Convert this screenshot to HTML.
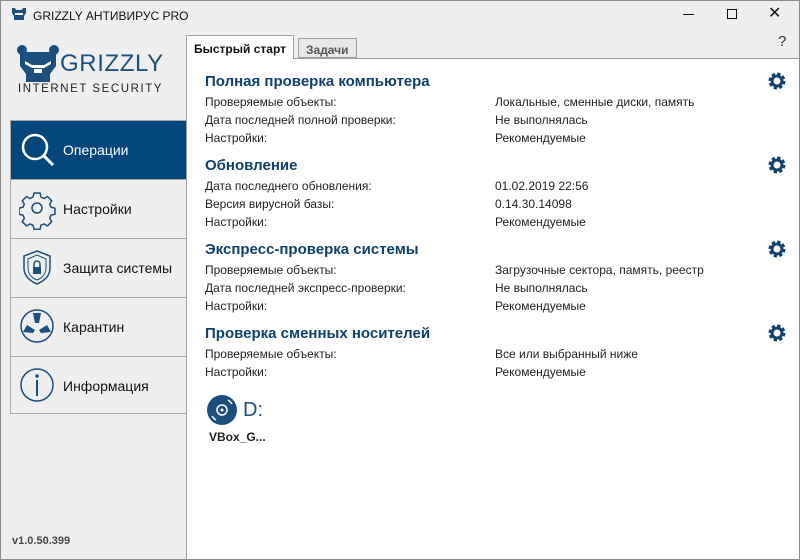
<!DOCTYPE html>
<html><head><meta charset="utf-8"><style>
*{margin:0;padding:0;box-sizing:border-box}
body{width:800px;height:560px;overflow:hidden;background:#efefef;font-family:"Liberation Sans",sans-serif;position:relative}
.frame{position:absolute;left:0;top:0;width:800px;height:560px;border:1px solid #8a8a8a;pointer-events:none}
.a{position:absolute}
.title{left:33px;top:9px;font-size:12px;color:#111}
.nav{left:10px;top:120px;width:177px;height:294px;border:1px solid #a8a8a8;border-right:none}
.it{height:59px;border-bottom:1px solid #a8a8a8;position:relative;font-size:14px;color:#111}
.it span{position:absolute;left:52px;top:21px}
.it svg{position:absolute;left:8px;top:10px}
.act{background:#02477c;color:#fff;height:59px}
.panel{left:186px;top:58px;width:614px;height:502px;background:#fff;border-top:1px solid #a0a0a0;border-left:1px solid #a0a0a0}
.tab{top:37px;height:22px;font-size:12px;font-weight:bold;padding:5px 7px 0}
h3{position:absolute;left:205px;font-size:15px;color:#10406f;font-weight:bold}
.r{position:absolute;font-size:12px;color:#222}
.gear{position:absolute;left:768px}
</style></head><body>
<svg class="a" style="left:11px;top:7px" width="16" height="14" viewBox="0 0 16 14"><path d="M1 1h3l1 2h6l1-2h3v5l-2 3v4H3V9L1 6z" fill="#1c4e7e"/><rect x="4" y="6" width="8" height="2" fill="#fff"/></svg>
<div class="a title">GRIZZLY АНТИВИРУС PRO</div>
<div class="a" style="left:683px;top:14px;width:11px;border-top:1px solid #111"></div>
<div class="a" style="left:727px;top:9px;width:10px;height:10px;border:1px solid #111"></div>
<div class="a" style="left:768px;top:3px;font-size:16px;color:#111">✕</div>
<div class="a" style="left:778px;top:33px;font-size:15px;color:#333">?</div>
<svg class="a" style="left:17px;top:44px" width="42" height="40" viewBox="0 0 42 40"><circle cx="5" cy="6" r="5" fill="#1c4e7e"/><circle cx="37" cy="6" r="5" fill="#1c4e7e"/><path d="M3 8h36v14l-6 8v8H9v-8L3 22z" fill="#1c4e7e"/><path d="M8 17l7 4h12l7-4v3l-7 4H15l-7-4z" fill="#fff"/><rect x="17" y="25" width="8" height="4" fill="#fff"/></svg>
<div class="a" style="left:60px;top:50px;font-size:24px;color:#1c4e7e;letter-spacing:0.6px">GRIZZLY</div>
<div class="a" style="left:18px;top:83px;font-size:11.5px;color:#222;letter-spacing:1.55px">INTERNET SECURITY</div>
<div class="a nav">
<div class="it act"><svg width="40" height="40" viewBox="0 0 40 40"><circle cx="16" cy="16" r="12" fill="none" stroke="#fff" stroke-width="2.5"/><path d="M25 25l9 9" stroke="#fff" stroke-width="3"/></svg><span>Операции</span></div>
<div class="it"><svg width="40" height="40" viewBox="0 0 40 40"><circle cx="18" cy="18" r="5" fill="none" stroke="#1c4e7e" stroke-width="1.5"/><path d="M15 3h6l1 4 3 1.5 3.5-2 4.2 4.2-2 3.5 1.3 3 4 1v6l-4 1-1.3 3 2 3.5-4.2 4.2-3.5-2-3 1.3-1 4h-6l-1-4-3-1.3-3.5 2-4.2-4.2 2-3.5-1.3-3-4-1v-6l4-1 1.3-3-2-3.5 4.2-4.2 3.5 2 3-1.5z" fill="none" stroke="#1c4e7e" stroke-width="1.5"/></svg><span>Настройки</span></div>
<div class="it"><svg width="40" height="40" viewBox="0 0 40 40"><path d="M18 2l13 5v12c0 8-6 13-13 16C11 32 5 27 5 19V7z" fill="none" stroke="#1c4e7e" stroke-width="1.5"/><path d="M18 6l9 4v9c0 6-4 10-9 12-5-2-9-6-9-12v-9z" fill="none" stroke="#1c4e7e" stroke-width="1"/><rect x="14" y="18" width="8" height="7" fill="#1c4e7e"/><path d="M15 18v-3a3 3 0 016 0v3" fill="none" stroke="#1c4e7e" stroke-width="1.5"/></svg><span>Защита системы</span></div>
<div class="it"><svg width="40" height="40" viewBox="0 0 40 40"><circle cx="18" cy="18" r="16" fill="none" stroke="#1c4e7e" stroke-width="1.5"/><path d="M14 5h8l-2 10h-4zM4 24l4-7 8 5-2 3zM32 24l-4-7-8 5 2 3z" fill="#1c4e7e"/></svg><span>Карантин</span></div>
<div class="it" style="border-bottom:none"><svg width="40" height="40" viewBox="0 0 40 40"><circle cx="18" cy="18" r="16" fill="none" stroke="#1c4e7e" stroke-width="1.5"/><circle cx="18" cy="9" r="1.8" fill="#1c4e7e"/><rect x="17" y="13" width="2" height="16" fill="#1c4e7e"/></svg><span>Информация</span></div>
</div>
<div class="a" style="left:12px;top:535px;font-size:11px;font-weight:bold;color:#444">v1.0.50.399</div>
<div class="a panel"></div>
<div class="a tab" style="left:186px;top:35px;height:24px;background:#fff;border:1px solid #a0a0a0;border-bottom:none;color:#111;padding-top:6px">Быстрый старт</div>
<div class="a tab" style="left:298px;top:38px;height:20px;background:#e8e8e8;border:1px solid #a0a0a0;color:#555;padding-top:4px">Задачи</div>

<h3 style="top:73px">Полная проверка компьютера</h3>
<div class="r" style="left:205px;top:95px">Проверяемые объекты:</div><div class="r" style="left:495px;top:95px">Локальные, сменные диски, память</div>
<div class="r" style="left:205px;top:113px">Дата последней полной проверки:</div><div class="r" style="left:495px;top:113px">Не выполнялась</div>
<div class="r" style="left:205px;top:131px">Настройки:</div><div class="r" style="left:495px;top:131px">Рекомендуемые</div>

<h3 style="top:157px">Обновление</h3>
<div class="r" style="left:205px;top:179px">Дата последнего обновления:</div><div class="r" style="left:495px;top:179px">01.02.2019 22:56</div>
<div class="r" style="left:205px;top:197px">Версия вирусной базы:</div><div class="r" style="left:495px;top:197px">0.14.30.14098</div>
<div class="r" style="left:205px;top:215px">Настройки:</div><div class="r" style="left:495px;top:215px">Рекомендуемые</div>

<h3 style="top:241px">Экспресс-проверка системы</h3>
<div class="r" style="left:205px;top:263px">Проверяемые объекты:</div><div class="r" style="left:495px;top:263px">Загрузочные сектора, память, реестр</div>
<div class="r" style="left:205px;top:281px">Дата последней экспресс-проверки:</div><div class="r" style="left:495px;top:281px">Не выполнялась</div>
<div class="r" style="left:205px;top:299px">Настройки:</div><div class="r" style="left:495px;top:299px">Рекомендуемые</div>

<h3 style="top:325px">Проверка сменных носителей</h3>
<div class="r" style="left:205px;top:347px">Проверяемые объекты:</div><div class="r" style="left:495px;top:347px">Все или выбранный ниже</div>
<div class="r" style="left:205px;top:365px">Настройки:</div><div class="r" style="left:495px;top:365px">Рекомендуемые</div>

<svg class="gear" style="top:72px" width="18" height="18" viewBox="0 0 18 18"><circle cx="9" cy="9" r="6.5" fill="none" stroke="#10406f" stroke-width="4" stroke-dasharray="3 2.1"/><circle cx="9" cy="9" r="5" fill="none" stroke="#10406f" stroke-width="3"/></svg>
<svg class="gear" style="top:156px" width="18" height="18" viewBox="0 0 18 18"><circle cx="9" cy="9" r="6.5" fill="none" stroke="#10406f" stroke-width="4" stroke-dasharray="3 2.1"/><circle cx="9" cy="9" r="5" fill="none" stroke="#10406f" stroke-width="3"/></svg>
<svg class="gear" style="top:240px" width="18" height="18" viewBox="0 0 18 18"><circle cx="9" cy="9" r="6.5" fill="none" stroke="#10406f" stroke-width="4" stroke-dasharray="3 2.1"/><circle cx="9" cy="9" r="5" fill="none" stroke="#10406f" stroke-width="3"/></svg>
<svg class="gear" style="top:324px" width="18" height="18" viewBox="0 0 18 18"><circle cx="9" cy="9" r="6.5" fill="none" stroke="#10406f" stroke-width="4" stroke-dasharray="3 2.1"/><circle cx="9" cy="9" r="5" fill="none" stroke="#10406f" stroke-width="3"/></svg>

<svg class="a" style="left:206px;top:394px" width="32" height="32" viewBox="0 0 32 32"><circle cx="16" cy="16" r="15" fill="#1c4e7e"/><circle cx="16" cy="16" r="5" fill="none" stroke="#fff" stroke-width="1.5"/><circle cx="16" cy="16" r="1.5" fill="#fff"/><path d="M6 22a11 11 0 004 4M22 6a11 11 0 014 4" stroke="#fff" stroke-width="1.5" fill="none"/></svg>
<div class="a" style="left:243px;top:399px;font-size:20px;color:#1c4e7e">D:</div>
<div class="a" style="left:209px;top:430px;font-size:12px;font-weight:bold;color:#222">VBox_G...</div>
<div class="frame"></div>
</body></html>
